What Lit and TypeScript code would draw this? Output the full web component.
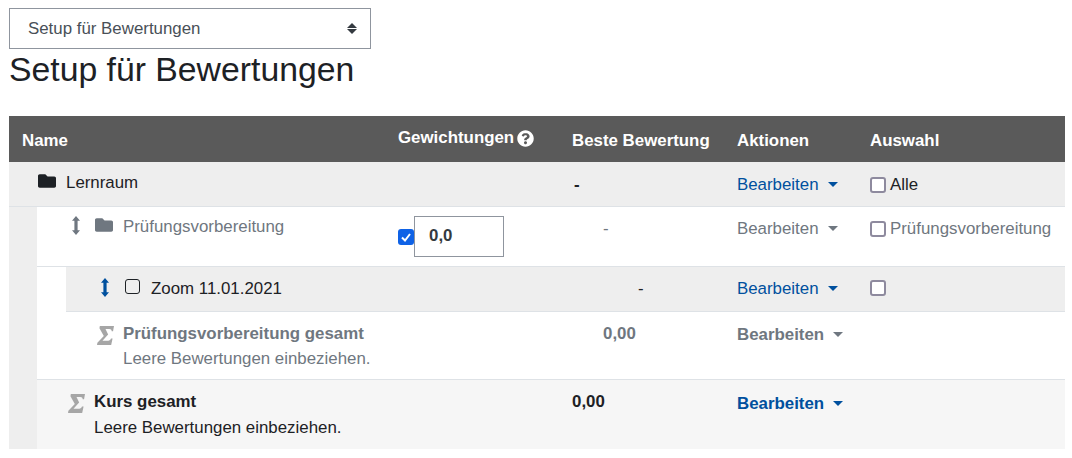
import { LitElement, html, css } from "lit";
import { customElement } from "lit/decorators.js";

const folder = () => html`<svg class="folder" viewBox="0 0 512 512" aria-hidden="true"><path fill="currentColor" d="M464 128H272l-64-64H48C21.49 64 0 85.49 0 112v288c0 26.51 21.49 48 48 48h416c26.51 0 48-21.49 48-48V176c0-26.51-21.49-48-48-48z"/></svg>`;
const move = () => html`<svg class="move" viewBox="0 0 8 19" aria-hidden="true"><path fill="currentColor" d="M4 0 8 4.800H5.600v9.400H8L4 19 0 14.200h2.400V4.800H0z"/></svg>`;
const sigma = () => html`<svg class="sigma" viewBox="0 0 18 20" aria-hidden="true"><path fill="currentColor" d="M3 0H18l-1 5.500h-1.400c-.2-1.600-.9-2.300-2.600-2.300H9l2.800 5.800L5.800 15.600h6c1.700 0 2.400-.8 3-2.300h1.700L15 20H0l.4-2.400 6.800-7.200L2.600 2.200z"/></svg>`;
const caret = () => html`<span class="caret"></span>`;

@customElement("app-root")
export class AppRoot extends LitElement {
  static styles = css`
    :host { display: block; width: 1072px; height: 458px; overflow: hidden; background: #fff; font-family: "Liberation Sans", Arial, sans-serif; font-size: 16.875px; color: #1d2125; }
    .page { padding: 8px 7px 0 9px; }
    .select { box-sizing: border-box; width: 362px; height: 41px; border: 1px solid #8f959e; display: flex; align-items: center; justify-content: space-between; padding: 0 13px 0 18px; color: #495057; }
    .updown { display: flex; flex-direction: column; gap: 1px; }
    .updown i { display: block; width: 0; height: 0; border-left: 5px solid transparent; border-right: 5px solid transparent; }
    .updown i:first-child { border-bottom: 5px solid #343a40; }
    .updown i:last-child { border-top: 5px solid #343a40; }
    h1 { margin: 0; font-size: 33.75px; font-weight: 400; line-height: 41px; height: 67px; }
    .row { display: grid; grid-template-columns: 389px 174px 165px 133px 1fr; box-sizing: border-box; border-bottom: 1px solid #dee2e6; }
    .head { height: 46px; background: #5a5a5a; color: #fff; font-weight: 700; border-bottom: 0; }
    .head > div { padding-top: 15px; line-height: 20px; }
    .head .name { padding-left: 13px; }
    .head .weights { padding-top: 12px; display: flex; align-items: flex-start; }
    .help { width: 17px; height: 17px; margin: 2px 0 0 3px; }
    .c1 { display: flex; align-items: flex-start; }
    .link { color: #00509e; display: flex; align-items: center; }
    .muted .link, .muted { color: #6f7780; }
    .caret { display: inline-block; width: 0; height: 0; margin-left: 9px; border-left: 5px solid transparent; border-right: 5px solid transparent; border-top: 5px solid currentColor; margin-top: -2px; }
    .check { display: flex; align-items: flex-start; gap: 4px; }
    .box { box-sizing: border-box; width: 16px; height: 16px; border: 2px solid #8e8a9e; border-radius: 3px; background: #fff; display: inline-block; flex: none; margin-top: 2px; }
    .folder { width: 18px; height: 18px; flex: none; }
    .move { width: 8px; height: 19px; flex: none; }
    .sigma { width: 17px; height: 19px; color: #a6a6a6; flex: none; }
    .lern { height: 45px; background: #eee; }
    .lern > div { padding-top: 13px; line-height: 20px; }
    .lern > .c1 { padding-top: 11px; padding-left: 29px; gap: 10px; }
    .lern .folder { margin-top: -1px; }
    .lern .grade { padding-left: 2px; font-weight: 700; }
    .nest { margin-left: 28px; background: #fff; }
    .nest .row { grid-template-columns: 361px 174px 165px 133px 1fr; }
    .prep { height: 60px; }
    .prep > div { padding-top: 12px; line-height: 20px; }
    .prep > .c1 { padding-top: 10px; padding-left: 35px; gap: 12px; }
    .prep .move { margin-top: -1px; }
    .prep .folder { margin-left: 3px; margin-right: -2px; margin-top: -1px; }
    .prep > .weight { padding-top: 0; display: flex; align-items: flex-start; }
    .cb { box-sizing: border-box; width: 16px; height: 16px; border-radius: 3px; background: #0f62e6; margin-top: 22px; flex: none; display: flex; align-items: center; justify-content: center; }
    .cb svg { width: 12px; height: 12px; }
    .input { box-sizing: border-box; width: 90px; height: 41px; margin-top: 9px; border: 1px solid #8f959e; font-weight: 700; color: #343a40; padding: 9px 0 0 14px; line-height: 20px; }
    .prep .grade { padding-left: 31px; }
    .zoom-row { margin-left: 29px; height: 45px; background: #eee; display: grid; grid-template-columns: 332px 174px 165px 133px 1fr; box-sizing: border-box; border-bottom: 1px solid #dee2e6; }
    .zoom-row > div { padding-top: 12px; line-height: 20px; }
    .zoom-row > .c1 { padding-left: 35px; gap: 17px; }
    .zoom-row .move { color: #00509e; margin-top: -1px; }
    .zoom-row .square { width: 15px; height: 15px; box-sizing: border-box; border: 1.500px solid #1d2125; border-radius: 3px; margin-left: -1px; margin-right: -6px; }
    .zoom-row .grade { padding-left: 66px; }
    .zoom-row .box { margin-top: 1px; }
    .cat { height: 68px; }
    .cat > div { padding-top: 12px; line-height: 20px; }
    .cat .c1 { padding-left: 60px; gap: 9px; }
    .cat .sigma { margin-top: 2px; }
    .b { font-weight: 700; }
    .sub { margin-top: 5px; line-height: 20px; }
    .cat .grade { padding-left: 31px; font-weight: 700; }
    .cat .act { padding-top: 13px; }
    .link.bold { font-weight: 700; }
    .nest .total { height: 69px; background: #f6f6f6; border-bottom: 0; }
    .total > div { padding-top: 12px; line-height: 20px; }
    .total .c1 { padding-left: 31px; gap: 9px; }
    .total .sigma { margin-top: 2px; }
    .total .sub { margin-top: 6px; }
    .total .grade { font-weight: 700; }
    .total .act { padding-top: 14px; }
    .outer { background: #eee; }
  `;

  render() {
    return html`<div class="page">
      <div class="select"><span>Setup für Bewertungen</span><span class="updown"><i></i><i></i></span></div>
      <h1>Setup für Bewertungen</h1>
      <div class="row head">
        <div class="name">Name</div>
        <div class="weights">Gewichtungen<svg class="help" viewBox="0 0 512 512"><path fill="#fff" d="M504 256c0 137-111 248-248 248S8 393 8 256 119 8 256 8s248 111 248 248zM262.700 90c-54.500 0-89.300 23-116.500 63.800-3.500 5.300-2.400 12.400 2.700 16.300l34.700 26.300c5.200 3.900 12.600 3 16.700-2.100 17.900-22.700 30.100-35.800 57.300-35.800 20.400 0 45.700 13.100 45.700 33 0 15-12.400 22.700-32.600 34-23.600 13.200-54.800 29.700-54.800 70.900V300c0 6.600 5.400 12 12 12h56c6.600 0 12-5.400 12-12v-1.300c0-28.600 83.500-29.800 83.500-107.200 0-58.300-60.500-102.500-117.300-102.500zM256 340c-25.400 0-46 20.600-46 46s20.600 46 46 46 46-20.600 46-46-20.600-46-46-46z"/></svg></div>
        <div>Beste Bewertung</div>
        <div>Aktionen</div>
        <div>Auswahl</div>
      </div>
      <div class="outer">
        <div class="row lern">
          <div class="c1">${folder()}<span>Lernraum</span></div>
          <div></div>
          <div class="grade">-</div>
          <div><span class="link">Bearbeiten${caret()}</span></div>
          <div class="check"><span class="box"></span><span>Alle</span></div>
        </div>
        <div class="nest">
          <div class="row prep muted">
            <div class="c1">${move()}${folder()}<span>Prüfungsvorbereitung</span></div>
            <div class="weight"><span class="cb"><svg viewBox="0 0 12 12"><path d="M2 6.500 5 9.500 10 3" fill="none" stroke="#fff" stroke-width="2"/></svg></span><span class="input">0,0</span></div>
            <div class="grade">-</div>
            <div><span class="link">Bearbeiten${caret()}</span></div>
            <div class="check"><span class="box"></span><span>Prüfungsvorbereitung</span></div>
          </div>
          <div class="zoom-row">
            <div class="c1">${move()}<span class="square"></span><span>Zoom 11.01.2021</span></div>
            <div></div>
            <div class="grade">-</div>
            <div><span class="link">Bearbeiten${caret()}</span></div>
            <div><span class="box"></span></div>
          </div>
          <div class="row cat muted">
            <div class="c1">${sigma()}<div><div class="b">Prüfungsvorbereitung gesamt</div><div class="sub">Leere Bewertungen einbeziehen.</div></div></div>
            <div></div>
            <div class="grade">0,00</div>
            <div class="act"><span class="link bold">Bearbeiten${caret()}</span></div>
            <div></div>
          </div>
          <div class="row total">
            <div class="c1">${sigma()}<div><div class="b">Kurs gesamt</div><div class="sub">Leere Bewertungen einbeziehen.</div></div></div>
            <div></div>
            <div class="grade">0,00</div>
            <div class="act"><span class="link bold">Bearbeiten${caret()}</span></div>
            <div></div>
          </div>
        </div>
      </div>
    </div>`;
  }
}
